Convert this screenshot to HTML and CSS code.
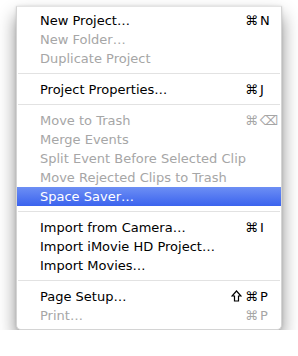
FILE: index.html
```html
<!DOCTYPE html>
<html lang="en">

<head>
    <meta charset="UTF-8">
    <meta name="viewport" content="width=device-width, initial-scale=1.0">
    <title>File Menu</title>
    <link rel="stylesheet" href="styles.css">
</head>

<body>
    <ul class="menu">
        <li class="item"><span class="label">New Project…</span><span class="keys"><span class="mod">⌘</span><span class="key">N</span></span></li>
        <li class="item disabled"><span class="label">New Folder…</span></li>
        <li class="item disabled"><span class="label">Duplicate Project</span></li>
        <li class="separator"></li>
        <li class="item"><span class="label">Project Properties…</span><span class="keys"><span class="mod">⌘</span><span class="key">J</span></span></li>
        <li class="separator"></li>
        <li class="item disabled"><span class="label">Move to Trash</span><span class="keys"><span class="mod">⌘</span><span class="key">⌫</span></span></li>
        <li class="item disabled"><span class="label">Merge Events</span></li>
        <li class="item disabled"><span class="label">Split Event Before Selected Clip</span></li>
        <li class="item disabled"><span class="label">Move Rejected Clips to Trash</span></li>
        <li class="item selected"><span class="label">Space Saver…</span></li>
        <li class="separator"></li>
        <li class="item"><span class="label">Import from Camera…</span><span class="keys"><span class="mod">⌘</span><span class="key">I</span></span></li>
        <li class="item"><span class="label">Import iMovie HD Project…</span></li>
        <li class="item"><span class="label">Import Movies…</span></li>
        <li class="separator"></li>
        <li class="item">
            <span class="label">Page Setup…</span>
            <span class="keys">
                <span class="mod">
                    <!-- shift key glyph -->
                    <svg class="shift" width="11" height="12" viewBox="0 0 11 12">
                        <path d="M5.5 1 L10 6 H7.5 V11 H3.5 V6 H1 Z" fill="none" stroke="currentColor" stroke-width="1.2" stroke-linejoin="miter"/>
                    </svg>⌘</span><span class="key">P</span>
            </span>
        </li>
        <li class="item disabled"><span class="label">Print…</span><span class="keys"><span class="mod">⌘</span><span class="key">P</span></span></li>
    </ul>
</body>

</html>
```

FILE: styles.css
```css
body {
    margin: 0;
    padding: 6px 0 0 16px;
    background-color: #fff;
    font-family: "DejaVu Sans", sans-serif;
    font-size: 13px;
    color: #000;
}
.menu {
    list-style: none;
    margin: 0;
    padding: 4px 0;
    width: 264px;
    background-color: #fff;
    border: 1px solid #d4d4d4;
    border-top-color: #e4e4e4;
    border-radius: 0 0 5px 5px;
    box-shadow: 0 10px 18px rgba(0, 0, 0, 0.45), 0 0 3px rgba(0, 0, 0, 0.12);
}
.item {
    display: flex;
    align-items: center;
    height: 19px;
    padding-left: 23px;
}
.label {
    flex: 1;
    white-space: nowrap;
}
.keys {
    display: flex;
}
.mod {
    display: flex;
    align-items: center;
    justify-content: flex-end;
    gap: 3px;
    width: 40px;
}
.key {
    width: 21px;
    padding-left: 2px;
}
.shift {
    margin-top: -1px;
}
.disabled {
    color: #a6a6a6;
}
.selected {
    color: #fff;
    background: linear-gradient(#6d8ff4, #3b63ee);
}
.separator {
    height: 1px;
    margin: 5px 1px 6px;
    background-color: #e2e2e2;
}
```
